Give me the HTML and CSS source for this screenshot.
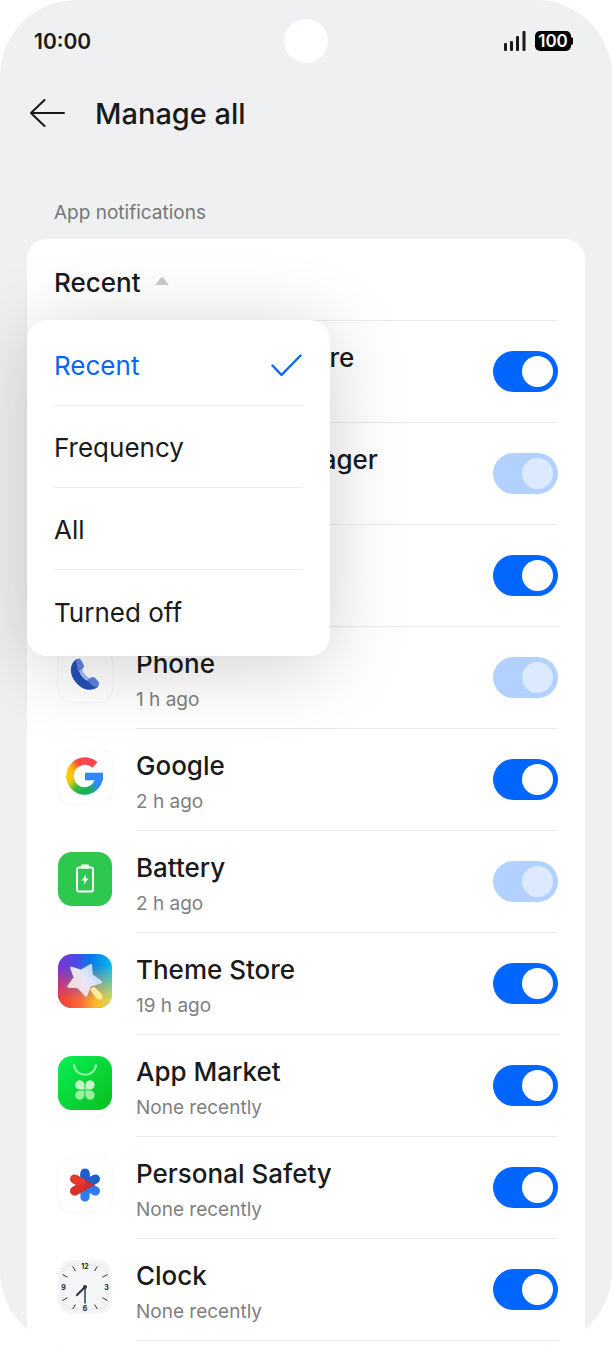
FILE: index.html
```html
<!DOCTYPE html>
<html lang="en">
<head>
  <meta charset="UTF-8" />
  <meta name="viewport" content="width=device-width, initial-scale=1.0" />
  <title>Manage all</title>
  <link rel="stylesheet" href="styles.css">
</head>
<body>
  <div class="phone">
    <div class="status">
      <span class="time">10:00</span>
      <span class="camera"></span>
      <div class="status-right">
        <svg width="22" height="22" viewBox="0 0 22 22" fill="#1a1a1a">
          <rect x="0" y="13" width="3" height="8" rx="1"/>
          <rect x="6" y="11" width="3" height="10" rx="1"/>
          <rect x="12" y="6" width="3" height="15" rx="1"/>
          <rect x="18.500" y="1" width="3" height="20" rx="1"/>
        </svg>
        <span class="battery">100</span>
      </div>
    </div>

    <header class="topbar">
      <button class="back" aria-label="Back">
        <svg width="35" height="28" viewBox="0 0 35 28" fill="none" stroke="#1a1a1a" stroke-width="2" stroke-linecap="round" stroke-linejoin="round">
          <path d="M14.500 1 1 14 14.500 27M1 14H34"/>
        </svg>
      </button>
      <h1>Manage all</h1>
    </header>

    <main>
      <h2>App notifications</h2>
      <div class="card">
        <div class="sort">
          <button class="sort-toggle" aria-haspopup="true" aria-expanded="true">
            Recent
            <svg width="14" height="14" viewBox="0 0 14 14"><path d="M7 1 13 8.500H1z" fill="#cbcbcb" stroke="#cbcbcb" stroke-linejoin="round"/></svg>
          </button>
          <div class="menu">
            <button class="selected">Recent
              <svg width="32" height="24" viewBox="0 0 32 24" fill="none" stroke="#0a66f0" stroke-width="2.400" stroke-linecap="round" stroke-linejoin="round"><path d="M1.500 11.500 10.500 21 29.500 1.500"/></svg>
            </button>
            <button>Frequency</button>
            <button>All</button>
            <button>Turned off</button>
          </div>
        </div>

        <ul class="apps">
          <li>
            <span class="icon"></span>
            <div class="row">
              <label for="app1"><b>Google Play store</b><small>5 min ago</small></label>
              <input type="checkbox" id="app1" checked>
            </div>
          </li>
          <li>
            <span class="icon"></span>
            <div class="row">
              <label for="app2"><b>Download Manager</b><small>8 min ago</small></label>
              <input type="checkbox" id="app2" checked disabled>
            </div>
          </li>
          <li>
            <span class="icon"></span>
            <div class="row">
              <label for="app3"><b>Messages</b><small>1 h ago</small></label>
              <input type="checkbox" id="app3" checked>
            </div>
          </li>
          <li>
            <span class="icon light">
              <svg viewBox="0 0 54 54">
                <path d="M19 11C11 15 11 27 18 34.500C24 42 33 44 40 39L30 31C27 31 22 27 21 22z" fill="#2350b8"/>
                <path d="M21 22 24 20C25 25 28 29 32 30L30 33C25 31 22 27 21 22z" fill="#a9bbf0"/>
                <path d="M18 12Q21.500 9 23 12L26 17.500Q26.500 19.500 24 21L20.500 23.500Q18 17 18 12z" fill="#5f80dd"/>
                <path d="M29.500 32 33 29.500Q35 28.500 37 30L40 33Q42 35.500 40 38.500Q39 40 37.500 39.500Q32 37 29.500 32z" fill="#5f80dd"/>
              </svg>
            </span>
            <div class="row">
              <label for="app4"><b>Phone</b><small>1 h ago</small></label>
              <input type="checkbox" id="app4" checked disabled>
            </div>
          </li>
          <li>
            <span class="icon light">
              <svg viewBox="0 0 54 54" fill="none" stroke-width="7.600">
                <defs>
                  <linearGradient id="g1" gradientUnits="userSpaceOnUse" x1="12" y1="24" x2="28" y2="10">
                    <stop offset="0" stop-color="#ffcb05"/><stop offset=".25" stop-color="#ffb512"/><stop offset=".65" stop-color="#fb4b41"/><stop offset="1" stop-color="#fb4650"/>
                  </linearGradient>
                  <linearGradient id="g2" gradientUnits="userSpaceOnUse" x1="10" y1="26" x2="26" y2="41">
                    <stop offset="0" stop-color="#ffcb05"/><stop offset=".25" stop-color="#e3cb10"/><stop offset=".65" stop-color="#3cb93f"/><stop offset="1" stop-color="#12b455"/>
                  </linearGradient>
                  <linearGradient id="g3" gradientUnits="userSpaceOnUse" x1="26" y1="41" x2="41" y2="28">
                    <stop offset="0" stop-color="#12b455"/><stop offset=".4" stop-color="#22a982"/><stop offset=".7" stop-color="#3187ff"/>
                  </linearGradient>
                </defs>
                <path d="M41 25.500A14.500 14.500 0 0 1 26.500 41" stroke="url(#g3)"/>
                <path d="M27 41A15 15 0 0 1 12 26" stroke="url(#g2)"/>
                <path d="M12 26.500A15 15 0 0 1 37 15" stroke="url(#g1)"/>
                <path d="M27 26.500H45" stroke="#3187ff"/>
              </svg>
            </span>
            <div class="row">
              <label for="app5"><b>Google</b><small>2 h ago</small></label>
              <input type="checkbox" id="app5" checked>
            </div>
          </li>
          <li>
            <span class="icon">
              <svg viewBox="0 0 54 54">
                <rect width="54" height="54" rx="14" fill="#2dc84d"/>
                <rect x="23" y="12.500" width="8" height="4" rx="1" fill="#fff"/>
                <rect x="19" y="15.500" width="16" height="24" rx="2" fill="none" stroke="#fff" stroke-width="2"/>
                <path d="M28 22.500 23.500 28.500H26.500L25.500 33 30.500 26.500H27.500z" fill="#fff"/>
              </svg>
            </span>
            <div class="row">
              <label for="app6"><b>Battery</b><small>2 h ago</small></label>
              <input type="checkbox" id="app6" checked disabled>
            </div>
          </li>
          <li>
            <span class="icon">
              <svg viewBox="0 0 54 54">
                <defs>
                  <linearGradient id="t1" x1="0" y1="0" x2="1" y2="0">
                    <stop offset="0" stop-color="#7b32d6"/><stop offset=".35" stop-color="#4b4be6"/><stop offset=".6" stop-color="#0879e8"/><stop offset="1" stop-color="#08b8ef"/>
                  </linearGradient>
                  <linearGradient id="t2" x1="0" y1="0" x2="1" y2="0">
                    <stop offset="0" stop-color="#f83a38"/><stop offset=".4" stop-color="#f9683a"/><stop offset=".7" stop-color="#fcb82b"/><stop offset="1" stop-color="#d3dc58"/>
                  </linearGradient>
                  <linearGradient id="t3" x1="0" y1="0" x2="0" y2="1">
                    <stop offset=".2" stop-color="#fff" stop-opacity="0"/><stop offset=".85" stop-color="#fff"/>
                  </linearGradient>
                  <mask id="t4"><rect width="54" height="54" fill="url(#t3)"/></mask>
                  <linearGradient id="t5" x1="0" y1="1" x2="1" y2="0">
                    <stop offset="0" stop-color="#ffd5cb"/><stop offset=".55" stop-color="#e6e6f8"/><stop offset="1" stop-color="#a3d0fa"/>
                  </linearGradient>
                </defs>
                <rect width="54" height="54" rx="14" fill="url(#t1)"/>
                <rect width="54" height="54" rx="14" fill="url(#t2)" mask="url(#t4)"/>
                <path d="M33 11 33.500 21 43 28 32 31.500 28 41.500 20 33 10.500 32.500 17 23.500 13.500 14 23 17z" fill="url(#t5)" stroke="url(#t5)" stroke-width="2.500" stroke-linejoin="round"/>
                <path d="M33.500 34Q36 32 38 34.500L43.500 40Q46 44 42.500 45.500Q40 46.500 37.500 43L33 37Q32 35 33.500 34z" fill="#fcec9b"/>
              </svg>
            </span>
            <div class="row">
              <label for="app7"><b>Theme Store</b><small>19 h ago</small></label>
              <input type="checkbox" id="app7" checked>
            </div>
          </li>
          <li>
            <span class="icon">
              <svg viewBox="0 0 54 54">
                <defs>
                  <linearGradient id="m1" x1="0" y1="0" x2="1" y2="1">
                    <stop offset="0" stop-color="#08ef55"/><stop offset="1" stop-color="#0abf1d"/>
                  </linearGradient>
                </defs>
                <rect width="54" height="54" rx="14" fill="url(#m1)"/>
                <path d="M16 9C18 22 36 22 38 9" fill="none" stroke="#8df5a0" stroke-width="2.200" stroke-linecap="round"/>
                <g fill="#c4f8c8">
                  <path d="M26.400 33.500H22A4.600 4.600 0 1 1 26.400 29.100z"/>
                  <path d="M27.400 33.500H31.800A4.600 4.600 0 1 0 27.400 29.100z"/>
                  <path d="M26.400 34.600H22A4.600 4.600 0 1 0 26.400 39z" fill="#9af0a2"/>
                  <path d="M27.400 34.600H31.800A4.600 4.600 0 1 1 27.400 39z" fill="#9af0a2"/>
                </g>
              </svg>
            </span>
            <div class="row">
              <label for="app8"><b>App Market</b><small>None recently</small></label>
              <input type="checkbox" id="app8" checked>
            </div>
          </li>
          <li>
            <span class="icon light">
              <svg viewBox="0 0 54 54" stroke-width="9.200" stroke-linecap="round" fill="none">
                <path d="M27 27V15M27 27 37.400 21" stroke="#1c5fc9"/>
                <path d="M27 27V39M27 27 37.400 33" stroke="#2f7bf0"/>
                <path d="M22.400 15V27H31.600V15" fill="#1c5fc9" stroke="none"/>
                <path d="M16.600 21 27 27" stroke="#e8372c" stroke-linecap="round"/>
                <path d="M16.600 33 27 27" stroke="#d8302a"/>
                <path d="M18 27V17L36.500 27z" fill="#e8372c"/>
                <path d="M18 27V37L36.500 27z" fill="#d8302a"/>
                <path d="M27 22V32L36.500 27z" fill="#c52e3a"/>
              </svg>
            </span>
            <div class="row">
              <label for="app9"><b>Personal Safety</b><small>None recently</small></label>
              <input type="checkbox" id="app9" checked>
            </div>
          </li>
          <li>
            <span class="icon">
              <svg viewBox="0 0 54 54">
                <rect width="54" height="54" rx="14" fill="#f4f5f7"/>
                <rect x="5" y="5" width="44" height="44" rx="9" fill="none" stroke="#d9dade" stroke-width="3" stroke-dasharray=".6 2"/>
                <g fill="#f4f5f7"><circle cx="27" cy="6" r="5"/><circle cx="27" cy="48" r="5"/><circle cx="6" cy="27" r="5"/><circle cx="48" cy="27" r="5"/></g>
                <path d="M14.700 6.500 17.500 11M39.300 6.500 36.500 11M14.700 49 17.500 44.500M39.300 49 36.500 44.500M4.500 14.500 9.500 17.300M49.500 14.500 44.500 17.300M4.500 40.500 9.500 37.700M49.500 40.500 44.500 37.700" stroke="#333" stroke-width="1"/>
                <g class="digits"><text x="27" y="8.500">12</text><text x="48.500" y="29.500">3</text><text x="27" y="51">6</text><text x="5.500" y="29.500">9</text></g>
                <path d="M27 27V43.500" stroke="#5d6b80" stroke-width="2"/>
                <path d="M27 27 19 35" stroke="#2d3747" stroke-width="2.200" stroke-linecap="round"/>
                <circle cx="27" cy="27" r="2" fill="#2d3747"/>
              </svg>
            </span>
            <div class="row">
              <label for="app10"><b>Clock</b><small>None recently</small></label>
              <input type="checkbox" id="app10" checked>
            </div>
          </li>
        </ul>
      </div>
    </main>
  </div>
</body>
</html>
```
FILE: styles.css
```css
* {
  box-sizing: border-box;
}
body {
  margin: 0;
  background: #fff;
  color: #1a1a1a;
  font-family: Inter, "Liberation Sans", sans-serif;
}
button {
  border: none;
  background: none;
  padding: 0;
  color: inherit;
  font: inherit;
  text-align: left;
}
svg {
  display: block;
}
.phone {
  background: #eff0f2;
  border-radius: 76px;
  overflow: hidden;
}
.status {
  display: grid;
  grid-template-columns: 1fr 44px 1fr;
  align-items: center;
  height: 82px;
  padding: 0 34px;
}
.time {
  font-size: 21px;
  font-weight: 600;
}
.camera {
  height: 44px;
  border-radius: 50%;
  background: #fff;
}
.status-right {
  display: flex;
  justify-content: flex-end;
  align-items: center;
  gap: 9px;
  padding-right: 7px;
}
.battery {
  position: relative;
  width: 36px;
  border-radius: 5px;
  background: #000;
  color: #fff;
  font-size: 17px;
  font-weight: 600;
  line-height: 20px;
  text-align: center;
}
.battery::after {
  content: "";
  position: absolute;
  top: 6px;
  right: -2px;
  width: 2px;
  height: 8px;
  border-radius: 0 2px 2px 0;
  background: #000;
}
.topbar {
  display: flex;
  align-items: center;
  gap: 30px;
  height: 62px;
  padding: 0 30px;
}
h1 {
  margin: 0;
  font-size: 29px;
  font-weight: 500;
}
main {
  padding: 55px 27px 0;
}
h2 {
  margin: 0 0 12px;
  padding: 0 27px;
  color: #76777a;
  font-size: 19px;
  font-weight: 400;
  line-height: 28px;
}
.card {
  padding-bottom: 6px;
  border-radius: 20px 20px 0 0;
  background: #fff;
}
.sort {
  position: relative;
  margin: 0 27px;
  border-bottom: 1px solid #ebebeb;
}
.sort-toggle {
  display: flex;
  align-items: center;
  gap: 14px;
  width: 100%;
  height: 81px;
  padding-top: 6px;
  font-size: 26px;
  font-weight: 500;
}
/* open drop-down, lies over the first rows */
.menu {
  position: absolute;
  top: 100%;
  left: -27px;
  z-index: 1;
  width: 303px;
  padding: 4px 27px;
  border-radius: 20px;
  background: #fff;
  box-shadow: 0 10px 80px rgba(0, 0, 0, 0.19);
}
.menu button {
  display: flex;
  justify-content: space-between;
  align-items: center;
  width: 100%;
  height: 82px;
  padding-top: 2px;
  border-bottom: 1px solid #ebebeb;
  font-size: 26px;
}
.menu button:last-child {
  border-bottom: none;
}
.menu .selected {
  color: #0a66f0;
}
.apps {
  margin: 0;
  padding: 0 27px;
  list-style: none;
}
.apps li {
  display: flex;
  gap: 24px;
  height: 102px;
}
.icon {
  flex: none;
  width: 54px;
  height: 54px;
  margin: 21px 0 0 4px;
  border-radius: 14px;
}
.light {
  box-shadow: 0 0 2px rgba(0, 0, 0, 0.1);
}
.digits {
  fill: #222;
  font-size: 7px;
  font-weight: 700;
  text-anchor: middle;
}
.row {
  flex: 1;
  display: flex;
  justify-content: space-between;
  align-items: center;
  border-bottom: 1px solid #ebebeb;
}
label {
  display: flex;
  flex-direction: column;
  padding-top: 8px;
  line-height: 36px;
}
label b {
  font-size: 26px;
  font-weight: 500;
}
label small {
  color: #808080;
  font-size: 19px;
}
input {
  appearance: none;
  display: flex;
  align-items: center;
  justify-content: flex-end;
  width: 65px;
  height: 41px;
  margin: 0;
  padding: 5px;
  border-radius: 21px;
  background: #0066ff;
}
input::before {
  content: "";
  width: 31px;
  height: 31px;
  border-radius: 50%;
  background: #fff;
}
input:disabled {
  background: #b2d1ff;
}
input:disabled::before {
  background: #dde9ff;
}
```
